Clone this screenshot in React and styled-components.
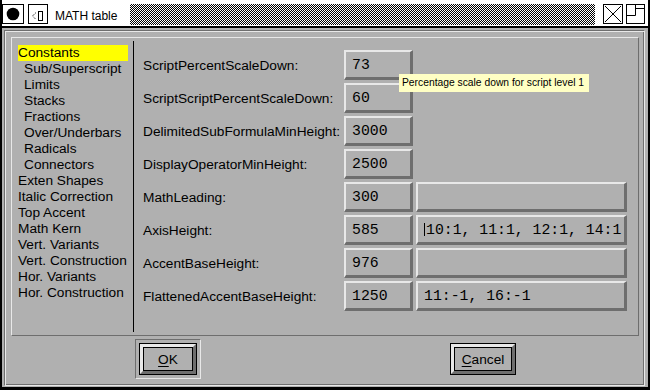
import React from "react"
import styled, { createGlobalStyle } from "styled-components"

const GREY = "#b0b0b0"
const LIGHT = "#e8e8e8"
const DARK = "#6e6e6e"

const GlobalStyle = createGlobalStyle`
  * { box-sizing: border-box; }
  html, body { margin: 0; padding: 0; background: #000; }
  body { font-family: "Liberation Sans", Arial, sans-serif; color: #000; }
`

const Window = styled.div`
  width: 650px;
  height: 390px;
  display: flex;
  flex-direction: column;
  border: solid #000;
  border-width: 0 2px 3px 2px;
  background: ${GREY};
`

const TitleBar = styled.div`
  height: 28px;
  flex: none;
  display: flex;
  align-items: flex-start;
  padding: 4px 3px 0 0;
  background: #fff;
  border-bottom: 2px solid #000;
`

const TitleButton = styled.div`
  width: ${(p) => p.$w}px;
  height: 20px;
  margin-left: ${(p) => p.$ml || 0}px;
  border: 1px solid #000;
  background: #fff;
  display: flex;
  align-items: center;
  justify-content: center;
  flex: none;
`

const Title = styled.div`
  width: 75px;
  margin-left: 7px;
  margin-top: 4px;
  font-size: 12px;
  line-height: 16px;
  white-space: nowrap;
`

const Checker = styled.div`
  flex: 1;
  height: 21px;
  background-color: #fff;
  background-image: repeating-conic-gradient(#000 0% 25%, #fff 0% 50%);
  background-size: 2px 2px;
`

const Body = styled.div`
  flex: 1;
  display: flex;
  padding: 2px 3px 1px 2px;
`

const OuterFrame = styled.div`
  flex: 1;
  display: flex;
  flex-direction: column;
  border: 1px solid;
  border-color: ${DARK} ${LIGHT} ${LIGHT} ${DARK};
  box-shadow: inset 1px 1px 0 ${LIGHT}, inset -1px -1px 0 ${DARK};
  padding: 6px 5px 0 6px;
`

const ContentFrame = styled.div`
  height: 299px;
  flex: none;
  display: flex;
  border: 1px solid;
  border-color: ${LIGHT} ${DARK} ${DARK} ${LIGHT};
`

const ListPanel = styled.div`
  width: 121px;
  flex: none;
  padding: 7px 5px 0 6px;
`

const ListItem = styled.div`
  height: 16px;
  line-height: 16px;
  font-size: 13.7px;
  white-space: nowrap;
  padding-left: ${(p) => (p.$sub ? 6 : 0)}px;
  background: ${(p) => (p.$selected ? "#ffff00" : "transparent")};
`

const Separator = styled.div`
  width: 1px;
  flex: none;
  margin: 3px 0;
  background: #000;
`

const FieldsPanel = styled.div`
  flex: 1;
  padding: 12px 0 0 9px;
`

const FieldGrid = styled.div`
  position: relative;
  display: grid;
  grid-template-columns: 198px 69px 211px;
  grid-auto-rows: 30px;
  gap: 3px;
  align-items: center;
`

const Label = styled.div`
  font-size: 13.7px;
  white-space: nowrap;
`

const Field = styled.div`
  height: 30px;
  display: flex;
  align-items: center;
  padding-left: 6px;
  border-style: solid;
  border-width: 2px 3px 3px 2px;
  border-color: ${LIGHT} ${DARK} ${DARK} ${LIGHT};
  font-family: "Liberation Mono", "Courier New", monospace;
  font-size: 14.8px;
  white-space: nowrap;
  overflow: hidden;
`

const Caret = styled.span`
  display: inline-block;
  width: 1px;
  height: 13px;
  margin-right: 1px;
  background: #000;
`

const Tooltip = styled.div`
  position: absolute;
  left: 256px;
  top: 24px;
  width: 190px;
  height: 18px;
  padding-left: 3px;
  background: #ffffc4;
  font-size: 10.3px;
  line-height: 18px;
  white-space: nowrap;
  z-index: 2;
`

const ButtonRow = styled.div`
  flex: 1;
  display: flex;
  align-items: center;
  justify-content: space-between;
  padding: 0 124px 3px 124px;
`

const DefaultRing = styled.div`
  padding: 4px;
  border: 1px solid;
  border-color: ${DARK} ${LIGHT} ${LIGHT} ${DARK};
  display: flex;
`

const PushButton = styled.button`
  width: ${(p) => p.$w}px;
  height: 30px;
  padding: 0;
  display: flex;
  border-style: solid;
  border-width: 3px;
  border-color: ${LIGHT} ${DARK} ${DARK} ${LIGHT};
  outline: 1px solid #000;
  background: ${GREY};
  font-family: "Liberation Sans", Arial, sans-serif;
  font-size: 13.7px;
  color: #000;
`

const ButtonFace = styled.span`
  flex: 1;
  border: 1px solid #000;
  display: flex;
  align-items: center;
  justify-content: center;
  padding-top: 1px;
`

const Mnemonic = styled.span`
  text-decoration: underline;
  text-underline-offset: 2px;
`

const listItems = [
  { name: "Constants", selected: true },
  { name: "Sub/Superscript", sub: true },
  { name: "Limits", sub: true },
  { name: "Stacks", sub: true },
  { name: "Fractions", sub: true },
  { name: "Over/Underbars", sub: true },
  { name: "Radicals", sub: true },
  { name: "Connectors", sub: true },
  { name: "Exten Shapes" },
  { name: "Italic Correction" },
  { name: "Top Accent" },
  { name: "Math Kern" },
  { name: "Vert. Variants" },
  { name: "Vert. Construction" },
  { name: "Hor. Variants" },
  { name: "Hor. Construction" },
]

const rows = [
  { label: "ScriptPercentScaleDown:", value: "73" },
  { label: "ScriptScriptPercentScaleDown:", value: "60" },
  { label: "DelimitedSubFormulaMinHeight:", value: "3000" },
  { label: "DisplayOperatorMinHeight:", value: "2500" },
  { label: "MathLeading:", value: "300", extra: "" },
  { label: "AxisHeight:", value: "585", extra: "10:1, 11:1, 12:1, 14:1", caret: true },
  { label: "AccentBaseHeight:", value: "976", extra: "" },
  { label: "FlattenedAccentBaseHeight:", value: "1250", extra: "11:-1, 16:-1" },
]

function App() {
  return (
    <>
      <GlobalStyle />
      <Window>
        <TitleBar>
          <TitleButton $w={22}>
            <svg width="14" height="14" viewBox="0 0 14 14">
              <circle cx="7" cy="7" r="6.3" fill="#000" />
            </svg>
          </TitleButton>
          <TitleButton $w={20} $ml={4}>
            <svg width="18" height="18" viewBox="0 0 18 18">
              <polyline points="7,7.5 3.5,11 7,14.5" fill="none" stroke="#000" strokeWidth="1" strokeDasharray="1 1" />
              <rect x="9.5" y="6.5" width="4" height="9" fill="none" stroke="#000" strokeWidth="1" />
            </svg>
          </TitleButton>
          <Title>MATH table</Title>
          <Checker />
          <TitleButton $w={20} $ml={8}>
            <svg width="18" height="18" viewBox="0 0 18 18">
              <path d="M1 1 L17 17 M17 1 L1 17" stroke="#000" strokeWidth="1" />
            </svg>
          </TitleButton>
          <TitleButton $w={19} $ml={3}>
            <svg width="17" height="18" viewBox="0 0 17 18">
              <path d="M8.5 0 V10.5 H0 M8.5 3.5 H17" fill="none" stroke="#000" strokeWidth="1" />
            </svg>
          </TitleButton>
        </TitleBar>
        <Body>
          <OuterFrame>
            <ContentFrame>
              <ListPanel>
                {listItems.map((it) => (
                  <ListItem key={it.name} $sub={it.sub} $selected={it.selected}>
                    {it.name}
                  </ListItem>
                ))}
              </ListPanel>
              <Separator />
              <FieldsPanel>
                <FieldGrid>
                  {rows.map((r) => (
                    <React.Fragment key={r.label}>
                      <Label style={{ gridColumn: 1 }}>{r.label}</Label>
                      <Field>{r.value}</Field>
                      {r.extra !== undefined && (
                        <Field>
                          {r.caret && <Caret />}
                          {r.extra}
                        </Field>
                      )}
                    </React.Fragment>
                  ))}
                  <Tooltip>Percentage scale down for script level 1</Tooltip>
                </FieldGrid>
              </FieldsPanel>
            </ContentFrame>
            <ButtonRow>
              <DefaultRing>
                <PushButton $w={56}>
                  <ButtonFace>
                    <Mnemonic>O</Mnemonic>K
                  </ButtonFace>
                </PushButton>
              </DefaultRing>
              <PushButton $w={64}>
                <ButtonFace>
                  <Mnemonic>C</Mnemonic>ancel
                </ButtonFace>
              </PushButton>
            </ButtonRow>
          </OuterFrame>
        </Body>
      </Window>
    </>
  )
}

export default App
